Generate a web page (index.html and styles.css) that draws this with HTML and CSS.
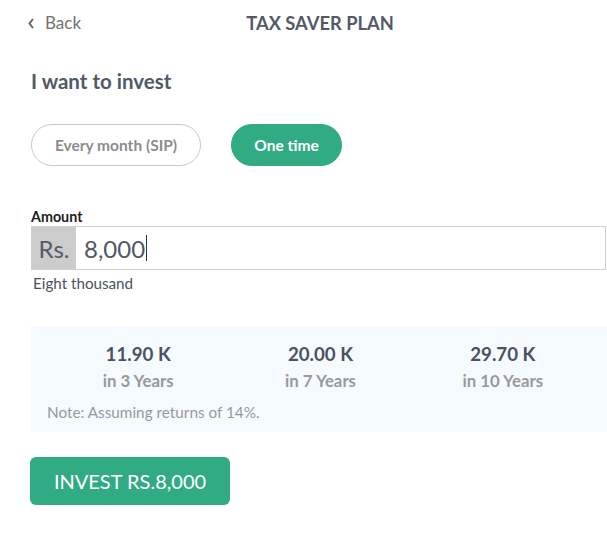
FILE: index.html
```html
<!DOCTYPE html>
<html>
<head>
<meta charset="utf-8">
<link rel="stylesheet" href="styles.css">
</head>
<body>
<div class="page">
  <header class="topbar">
    <a class="back"><svg class="chev" width="8" height="12" viewBox="0 0 8 12"><path d="M6 2 L2.5 6.5 L6 11" fill="none" stroke="#666" stroke-width="2"/></svg><span>Back</span></a>
    <h1 class="title">TAX SAVER PLAN</h1>
  </header>
  <main class="content">
    <h2 class="heading">I want to invest</h2>
    <div class="modes">
      <button class="pill pill-outline">Every month (SIP)</button>
      <button class="pill pill-active">One time</button>
    </div>
    <label class="label">Amount</label>
    <div class="amount">
      <span class="prefix">Rs.</span>
      <span class="value">8,000<span class="caret"></span></span>
    </div>
    <div class="words">Eight thousand</div>
    <section class="projection">
      <div class="cols">
        <div class="col"><div class="num">11.90 K</div><div class="yrs">in 3 Years</div></div>
        <div class="col"><div class="num">20.00 K</div><div class="yrs">in 7 Years</div></div>
        <div class="col"><div class="num">29.70 K</div><div class="yrs">in 10 Years</div></div>
      </div>
      <div class="note">Note: Assuming returns of 14%.</div>
    </section>
    <button class="invest">INVEST RS.8,000</button>
  </main>
</div>
</body>
</html>
```
FILE: styles.css
```css
* { box-sizing: border-box; }
html, body { margin: 0; padding: 0; background: #fff; overflow: hidden; }
body { font-family: Lato, "Open Sans", sans-serif; }
.page { width: 607px; overflow: hidden; }
.topbar { height: 46px; display: flex; align-items: center; justify-content: center; position: relative; padding-left: 33px; }
.back { position: absolute; left: 27px; top: 12px; display: flex; align-items: center; gap: 10px; color: #727272; font-size: 17px; font-weight: 400; }
.chev { margin-top: 1px; }
.title { margin: 0; font-size: 18.3px; font-weight: 700; color: #525a66; letter-spacing: 0; }
.content { padding: 0 0 0 31px; }
.heading { margin: 23px 0 0; font-size: 20.5px; font-weight: 700; color: #505967; line-height: 24px; }
.modes { display: flex; gap: 30px; margin-top: 31px; }
.pill { font-family: inherit; font-size: 15.5px; font-weight: 700; height: 42px; border-radius: 21px; padding: 0; }
.pill-outline { width: 170px; background: #fff; border: 1px solid #c8c8c8; color: #8c8c8c; }
.pill-active { width: 111px; background: #31ab84; border: 1px solid #31ab84; color: #fff; }
.label { display: block; margin-top: 43px; font-size: 14.3px; font-weight: 700; color: #222; line-height: 16px; }
.amount { display: flex; height: 44px; border: 1px solid #cfcfcf; width: 575px; margin-top: 1px; }
.prefix { background: #cccccc; color: #555b66; font-size: 24px; width: 44px; display: flex; align-items: center; justify-content: center; }
.value { display: flex; align-items: center; padding-left: 8px; font-size: 24px; color: #4f5866; }
.caret { display: inline-block; width: 1px; height: 26px; background: #333; margin-left: 1px; }
.words { margin-top: 4px; padding-left: 2px; font-size: 15.2px; color: #4a5262; line-height: 18px; }
.projection { margin-top: 34px; background: #f5faff; width: 579px; padding: 16px 16px 0 16px; height: 106px; }
.cols { display: grid; grid-template-columns: 1fr 1fr 1fr; text-align: center; }
.num { font-size: 18.7px; font-weight: 700; color: #4a5160; line-height: 24px; }
.yrs { font-size: 16.8px; font-weight: 700; color: #999; line-height: 20px; margin-top: 5px; }
.note { margin-top: 12px; font-size: 15.3px; color: #999; line-height: 18px; }
.invest { display: block; margin-top: 25px; margin-left: -1px; width: 200px; height: 48px; border: 0; border-radius: 6px; background: #31ab84; color: #fff; font-family: inherit; font-size: 20px; padding: 0; }
```
